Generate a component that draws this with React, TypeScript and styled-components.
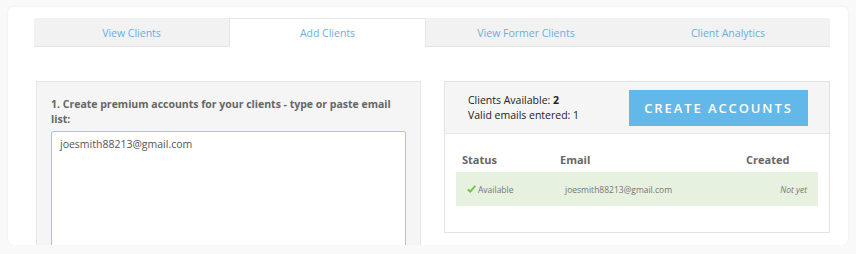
import React, { useState } from "react";
import styled, { createGlobalStyle } from "styled-components";

const GlobalStyle = createGlobalStyle`
  html, body {
    margin: 0;
    padding: 0;
    background: #f9f9f9;
    font-family: "Open Sans", "Liberation Sans", Arial, sans-serif;
  }
`;

const Card = styled.div`
  margin: 7px 8px 0;
  width: 840px;
  height: 238px;
  box-sizing: border-box;
  background: #ffffff;
  border-radius: 6px;
  box-shadow: 0 0 3px rgba(0, 0, 0, 0.06);
  padding: 11px 18px 0 26px;
  overflow: hidden;
`;

const Tabs = styled.div`
  display: flex;
  height: 29px;
  background: #f2f2f2;
  border-bottom: 1px solid #e4e4e4;
  box-sizing: border-box;
`;

const Tab = styled.div<{ $active?: boolean; $width: number }>`
  flex: 0 0 ${({ $width }) => $width}px;
  display: flex;
  align-items: center;
  justify-content: center;
  font-size: 10.5px;
  color: #6aaee2;
  cursor: pointer;
  box-sizing: border-box;
  background: ${({ $active }) => ($active ? "#ffffff" : "transparent")};
  border: 1px solid ${({ $active }) => ($active ? "#e6e6e6" : "transparent")};
  border-bottom: none;
  height: ${({ $active }) => ($active ? "29px" : "28px")};
`;

const Panels = styled.div`
  display: grid;
  grid-template-columns: 385px 386px;
  column-gap: 23px;
  margin: 34px 0 0 2px;
  align-items: start;
`;

const EntryPanel = styled.div`
  background: #f5f5f5;
  border: 1px solid #e6e6e6;
  padding: 15px 14px 0 14px;
  height: 200px;
  box-sizing: border-box;
`;

const Label = styled.div`
  font-size: 10.5px;
  font-weight: 700;
  line-height: 15px;
  color: #666666;
  margin-bottom: 4px;
`;

const EmailInput = styled.textarea`
  display: block;
  width: 100%;
  height: 140px;
  box-sizing: border-box;
  resize: none;
  border: 1px solid #9ac7ef;
  border-radius: 2px;
  outline: none;
  padding: 4px 8px;
  font-family: inherit;
  font-size: 10.5px;
  line-height: 16px;
  color: #555555;
  background: #ffffff;
`;

const ResultPanel = styled.div`
  border: 1px solid #e3e3e3;
  height: 152px;
  box-sizing: border-box;
`;

const Summary = styled.div`
  display: flex;
  align-items: center;
  justify-content: space-between;
  height: 52px;
  box-sizing: border-box;
  background: #f5f5f5;
  border-bottom: 1px solid #e6e6e6;
  padding: 0 21px 0 23px;
`;

const Counts = styled.div`
  font-size: 10.5px;
  line-height: 15px;
  color: #222222;

  b {
    font-weight: 700;
  }
`;

const CreateButton = styled.button`
  width: 179px;
  height: 36px;
  border: none;
  background: #62b8e8;
  color: #ffffff;
  font-family: inherit;
  font-size: 13px;
  font-weight: 600;
  letter-spacing: 1.9px;
  cursor: pointer;
`;

const Table = styled.div`
  padding: 13px 11px 0 11px;
`;

const Row = styled.div<{ $head?: boolean }>`
  display: grid;
  grid-template-columns: 104px 1fr 72px;
  align-items: center;
  height: ${({ $head }) => ($head ? "25px" : "34px")};
  background: ${({ $head }) => ($head ? "transparent" : "#e6f1df")};
`;

const HeadCell = styled.div<{ $pad?: string }>`
  font-size: 11px;
  font-weight: 700;
  color: #666666;
  padding: ${({ $pad }) => $pad || "0"};
`;

const Cell = styled.div<{ $pad?: string; $align?: string; $italic?: boolean }>`
  font-size: 8.5px;
  color: #777777;
  padding: ${({ $pad }) => $pad || "0"};
  font-style: ${({ $italic }) => ($italic ? "italic" : "normal")};
  display: flex;
  align-items: center;
  justify-content: ${({ $align }) => ($align === "right" ? "flex-end" : "flex-start")};
  gap: 2px;
`;

const Check = () => (
  <svg width="9" height="8" viewBox="0 0 9 8">
    <path d="M0.8 4.3 L3.2 6.7 L8.3 0.9" fill="none" stroke="#6cc24a" strokeWidth="1.8" />
  </svg>
);

const tabs = [
  { label: "View Clients", width: 195 },
  { label: "Add Clients", width: 197 },
  { label: "View Former Clients", width: 200 },
  { label: "Client Analytics", width: 204 },
];

const App = () => {
  const [activeTab, setActiveTab] = useState(1);
  const [emails, setEmails] = useState("joesmith88213@gmail.com");

  return (
    <>
      <GlobalStyle />
      <Card>
        <Tabs>
          {tabs.map((tab, index) => (
            <Tab
              key={tab.label}
              $width={tab.width}
              $active={index === activeTab}
              onClick={() => setActiveTab(index)}
            >
              {tab.label}
            </Tab>
          ))}
        </Tabs>
        <Panels>
          <EntryPanel>
            <Label>1. Create premium accounts for your clients - type or paste email list:</Label>
            <EmailInput value={emails} onChange={(e) => setEmails(e.target.value)} />
          </EntryPanel>
          <ResultPanel>
            <Summary>
              <Counts>
                Clients Available: <b>2</b>
                <br />
                Valid emails entered: 1
              </Counts>
              <CreateButton>CREATE ACCOUNTS</CreateButton>
            </Summary>
            <Table>
              <Row $head>
                <HeadCell $pad="0 0 0 6px">Status</HeadCell>
                <HeadCell>Email</HeadCell>
                <HeadCell>Created</HeadCell>
              </Row>
              <Row>
                <Cell $pad="0 0 0 11px">
                  <Check />
                  Available
                </Cell>
                <Cell $pad="0 0 0 5px">joesmith88213@gmail.com</Cell>
                <Cell $pad="0 11px 0 0" $align="right" $italic>
                  Not yet
                </Cell>
              </Row>
            </Table>
          </ResultPanel>
        </Panels>
      </Card>
    </>
  );
};

export default App;
